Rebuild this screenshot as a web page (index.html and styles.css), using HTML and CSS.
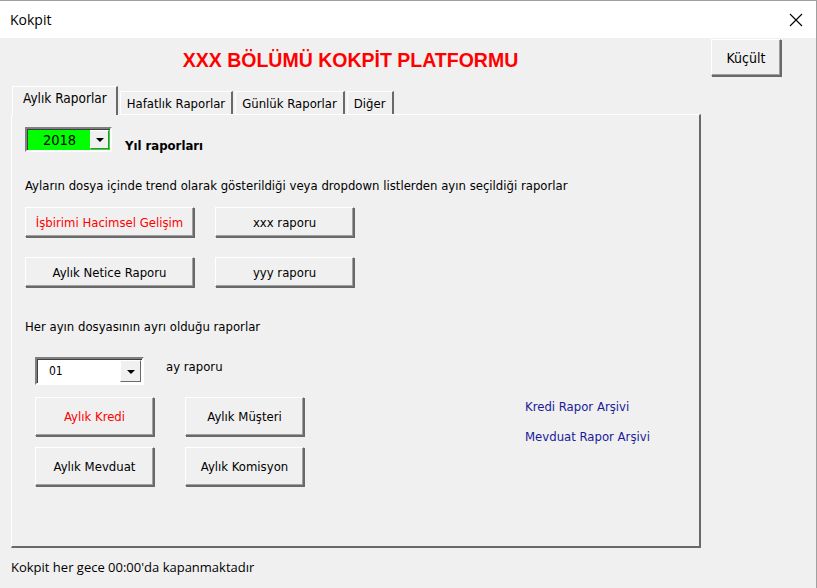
FILE: index.html
```html
<!DOCTYPE html>
<html lang="tr">
<head>
    <meta charset="UTF-8">
    <title>Kokpit</title>
    <link rel="stylesheet" href="styles.css">
</head>
<body>
    <div class="titlebar">
        <span class="title">Kokpit</span>
        <svg class="close" width="14" height="14" viewBox="0 0 14 14">
            <path d="M1 1 L13 13 M13 1 L1 13" stroke="#000" stroke-width="1.1" fill="none"/>
        </svg>
    </div>

    <div class="form">
        <div class="top">
            <h1 class="heading">XXX BÖLÜMÜ KOKPİT PLATFORMU</h1>
            <button class="btn small-btn">Küçült</button>
        </div>

        <div class="tabs">
            <div class="tab active">Aylık Raporlar</div>
            <div class="tab">Hafatlık Raporlar</div>
            <div class="tab">Günlük Raporlar</div>
            <div class="tab">Diğer</div>
        </div>

        <div class="panel">
            <div class="year-row">
                <div class="combo combo-year">
                    <span class="combo-value">2018</span>
                    <span class="combo-arrow"></span>
                </div>
                <span class="year-label">Yıl raporları</span>
            </div>

            <p class="note">Ayların dosya içinde trend olarak gösterildiği veya dropdown listlerden ayın seçildiği raporlar</p>

            <div class="grid grid-year">
                <button class="btn red">İşbirimi Hacimsel Gelişim</button>
                <button class="btn">xxx raporu</button>
                <button class="btn">Aylık Netice Raporu</button>
                <button class="btn">yyy raporu</button>
            </div>

            <p class="note note-month">Her ayın dosyasının ayrı olduğu raporlar</p>

            <div class="month-section">
                <div class="month-left">
                    <div class="month-row">
                        <div class="combo combo-month">
                            <span class="combo-value">01</span>
                            <span class="combo-arrow"></span>
                        </div>
                        <span class="month-label">ay raporu</span>
                    </div>
                    <div class="grid grid-month">
                        <button class="btn red">Aylık Kredi</button>
                        <button class="btn">Aylık Müşteri</button>
                        <button class="btn">Aylık Mevduat</button>
                        <button class="btn">Aylık Komisyon</button>
                    </div>
                </div>
                <div class="links">
                    <span class="link">Kredi Rapor Arşivi</span>
                    <span class="link">Mevduat Rapor Arşivi</span>
                </div>
            </div>
        </div>

        <p class="footer">Kokpit her gece 00:00'da kapanmaktadır</p>
    </div>
</body>
</html>
```

FILE: styles.css
```css
* {
    margin: 0;
    padding: 0;
    box-sizing: border-box;
}

body {
    width: 817px;
    height: 588px;
    overflow: hidden;
    background-color: #f0f0f0;
    font-family: "DejaVu Sans Condensed", "Liberation Sans", sans-serif;
    font-size: 13px;
    color: #000000;
    border-right: 1px solid #a0a0a0;
}

.titlebar {
    height: 38px;
    display: flex;
    justify-content: space-between;
    align-items: center;
    padding: 0 13px 0 10px;
    background-color: #ffffff;
    border-top: 1px solid #a0a0a0;
    font-family: "Open Sans", "Liberation Sans", sans-serif;
    font-size: 14px;
}

.form {
    padding: 0 0 0 11px;
}

.top {
    display: flex;
    align-items: flex-start;
}

.heading {
    width: 679px;
    margin-top: 11px;
    text-align: center;
    color: #ff0000;
    font-family: "Liberation Sans", Arial, sans-serif;
    font-size: 19.5px;
    font-weight: bold;
    line-height: 22px;
}

.btn {
    display: flex;
    align-items: center;
    justify-content: center;
    background-color: #f0f0f0;
    border: 1px solid;
    border-color: #ffffff #696969 #696969 #ffffff;
    box-shadow: inset -1px -1px 0 #a0a0a0, 1px 1px 0 #696969;
    font-family: "DejaVu Sans Condensed", "Liberation Sans", sans-serif;
    font-size: 13px;
    color: #000000;
}

.btn.red {
    color: #ff0000;
}

.small-btn {
    width: 70px;
    height: 37px;
    margin-top: 1px;
    margin-left: 21px;
    font-size: 14px;
}

.tabs {
    display: flex;
    align-items: flex-end;
    gap: 2px;
    margin-top: 10px;
    margin-left: 1px;
    height: 28px;
    position: relative;
    z-index: 1;
}

.tab {
    height: 23px;
    padding: 0 6px 0 6px;
    display: flex;
    align-items: center;
    border: 1px solid;
    border-bottom: none;
    border-color: #ffffff #696969 #696969 #ffffff;
    border-right-width: 2px;
    font-size: 13px;
}

.tab.active {
    height: 29px;
    padding: 0 9px 6px 10px;
    margin-bottom: -1px;
    background-color: #f0f0f0;
    font-size: 13.5px;
}

.panel {
    width: 690px;
    height: 434px;
    padding: 12px 0 0 13px;
    border: 1px solid;
    border-color: #ffffff #696969 #696969 #ffffff;
    border-right-width: 2px;
    border-bottom-width: 2px;
}

.year-row {
    display: flex;
    align-items: flex-start;
    height: 25px;
    gap: 13px;
}

.combo {
    display: flex;
    border: 2px solid;
    border-color: #808080 #ffffff #ffffff #808080;
    box-shadow: inset 1px 1px 0 #404040;
}

.combo-year {
    width: 87px;
    height: 25px;
    background-color: #00ff00;
}

.combo-month {
    width: 109px;
    height: 28px;
    background-color: #ffffff;
}

.combo-value {
    flex: 1;
    display: flex;
    align-items: center;
}

.combo-year .combo-value {
    justify-content: center;
    font-size: 14.5px;
    padding-left: 2px;
}

.combo-month .combo-value {
    padding-left: 12px;
    font-size: 12px;
}

.combo-arrow {
    width: 19px;
    margin: 1px 1px 1px 0;
    display: flex;
    align-items: center;
    justify-content: center;
    background-color: #f0f0f0;
    border: 1px solid;
    border-color: #ffffff #696969 #696969 #ffffff;
}

.combo-arrow::after {
    content: "";
    border-left: 4px solid transparent;
    border-right: 4px solid transparent;
    border-top: 4px solid #000000;
    margin-top: 1px;
}

.combo-month .combo-arrow {
    width: 21px;
}

.year-label {
    font-weight: bold;
    font-size: 13px;
    line-height: 16px;
    margin-top: 11px;
}

.note {
    margin-top: 26px;
    font-size: 13px;
    line-height: 16px;
}

.grid {
    display: grid;
}

.grid-year {
    grid-template-columns: 169px 139px;
    grid-auto-rows: 30px;
    column-gap: 21px;
    row-gap: 20px;
    margin-top: 13px;
}

.note-month {
    margin-top: 32px;
}

.month-section {
    display: flex;
    margin-top: 22px;
}

.month-left {
    margin-left: 10px;
}

.month-row {
    display: flex;
    gap: 22px;
}

.month-label {
    font-size: 13px;
    margin-top: 2px;
}

.grid-month {
    grid-template-columns: 119px 119px;
    grid-auto-rows: 39px;
    column-gap: 31px;
    row-gap: 11px;
    margin-top: 12px;
}

.links {
    display: flex;
    flex-direction: column;
    gap: 14px;
    margin-left: 221px;
    margin-top: 42px;
}

.link {
    color: #1a1a9a;
    font-size: 13px;
    line-height: 16px;
}

.footer {
    margin-top: 11px;
    font-family: "Open Sans", "Liberation Sans", sans-serif;
    font-size: 13px;
    line-height: 16px;
}
```
